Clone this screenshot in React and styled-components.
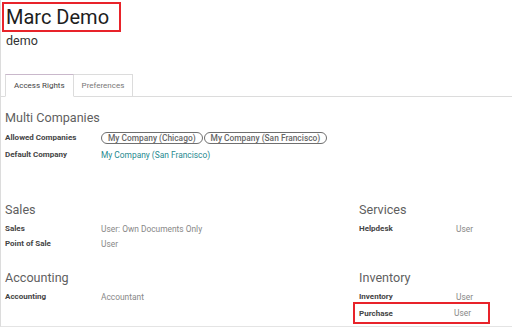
import styled, { createGlobalStyle } from "styled-components";

const Global = createGlobalStyle`
  body {
    margin: 0;
    background: #fff;
    font-family: Roboto, "Liberation Sans", sans-serif;
  }
`;

const Page = styled.div`
  width: 512px;
  height: 327px;
  box-sizing: border-box;
  border-left: 1px solid #dcdcdc;
  border-bottom: 1px solid #e4e4e4;
  overflow: hidden;
`;

const Head = styled.div`
  padding: 2px 0 0 1px;
`;

const Name = styled.h1`
  display: inline-block;
  margin: 0;
  padding: 0 10px 0 2px;
  height: 26px;
  border: 2px solid #e8232a;
  font-size: 20px;
  font-weight: 400;
  line-height: 26px;
  color: #1d1d1d;
`;

const Login = styled.div`
  padding-left: 4px;
  margin-top: 1px;
  font-size: 12.5px;
  color: #333;
`;

const TabBar = styled.div`
  display: flex;
  margin-top: 26px;
  padding-left: 4px;
  border-bottom: 1px solid #dcdcdc;
`;

const Tab = styled.div`
  padding: 6px 8px 6px;
  margin-bottom: -1px;
  font-size: 8px;
  color: ${(p) => (p.$active ? "#444" : "#777")};
  background: #fff;
  border: 1px solid #dcdcdc;
  border-top-color: ${(p) => (p.$active ? "#c9b8cb" : "#dcdcdc")};
  border-bottom-color: ${(p) => (p.$active ? "#fff" : "#dcdcdc")};
  border-left-width: ${(p) => (p.$active ? "1px" : "0")};
`;

const Grid = styled.div`
  display: grid;
  grid-template-columns: 354px 1fr;
  padding-left: 4px;
`;

const Group = styled.div`
  grid-column: ${(p) => (p.$full ? "1 / -1" : "auto")};
  padding-top: ${(p) => p.$top}px;
  min-height: ${(p) => p.$h}px;
`;

const Title = styled.div`
  font-size: 12.6px;
  color: #5f5f5f;
  line-height: 16px;
  margin-bottom: 3px;
`;

const Row = styled.div`
  display: grid;
  grid-template-columns: ${(p) => p.$label}px 1fr;
  align-items: center;
  height: ${(p) => p.$h || 15}px;
  font-size: 8px;
`;

const Label = styled.div`
  font-weight: 700;
  color: #444;
`;

const Value = styled.div`
  display: flex;
  gap: 1px;
  font-size: 8.4px;
  color: ${(p) => (p.$link ? "#1f8a8f" : "#888")};
`;

const Tag = styled.span`
  padding: 0 6px;
  border: 1px solid #6f6f6f;
  border-radius: 7px;
  line-height: 10px;
  color: #666;
  font-weight: 500;
`;

const Mark = styled.div`
  margin: -2px 22px 0 -6px;
  padding-left: 4px;
  border: 2px solid #e8232a;
`;

export default function App() {
  return (
    <Page>
      <Global />
      <Head>
        <Name>Marc Demo</Name>
        <Login>demo</Login>
      </Head>
      <TabBar>
        <Tab $active>Access Rights</Tab>
        <Tab>Preferences</Tab>
      </TabBar>
      <Grid>
        <Group $full $top={13} $h={92}>
          <Title>Multi Companies</Title>
          <Row $label={96} $h={17}>
            <Label>Allowed Companies</Label>
            <Value>
              <Tag>My Company (Chicago)</Tag>
              <Tag>My Company (San Francisco)</Tag>
            </Value>
          </Row>
          <Row $label={96} $h={17}>
            <Label>Default Company</Label>
            <Value $link>My Company (San Francisco)</Value>
          </Row>
        </Group>
        <Group $top={0} $h={68}>
          <Title>Sales</Title>
          <Row $label={96}>
            <Label>Sales</Label>
            <Value>User: Own Documents Only</Value>
          </Row>
          <Row $label={96}>
            <Label>Point of Sale</Label>
            <Value>User</Value>
          </Row>
        </Group>
        <Group $top={0} $h={68}>
          <Title>Services</Title>
          <Row $label={97}>
            <Label>Helpdesk</Label>
            <Value>User</Value>
          </Row>
        </Group>
        <Group $top={0}>
          <Title>Accounting</Title>
          <Row $label={96}>
            <Label>Accounting</Label>
            <Value>Accountant</Value>
          </Row>
        </Group>
        <Group $top={0}>
          <Title>Inventory</Title>
          <Row $label={97}>
            <Label>Inventory</Label>
            <Value>User</Value>
          </Row>
          <Mark>
            <Row $label={95} $h={18}>
              <Label>Purchase</Label>
              <Value>User</Value>
            </Row>
          </Mark>
        </Group>
      </Grid>
    </Page>
  );
}
